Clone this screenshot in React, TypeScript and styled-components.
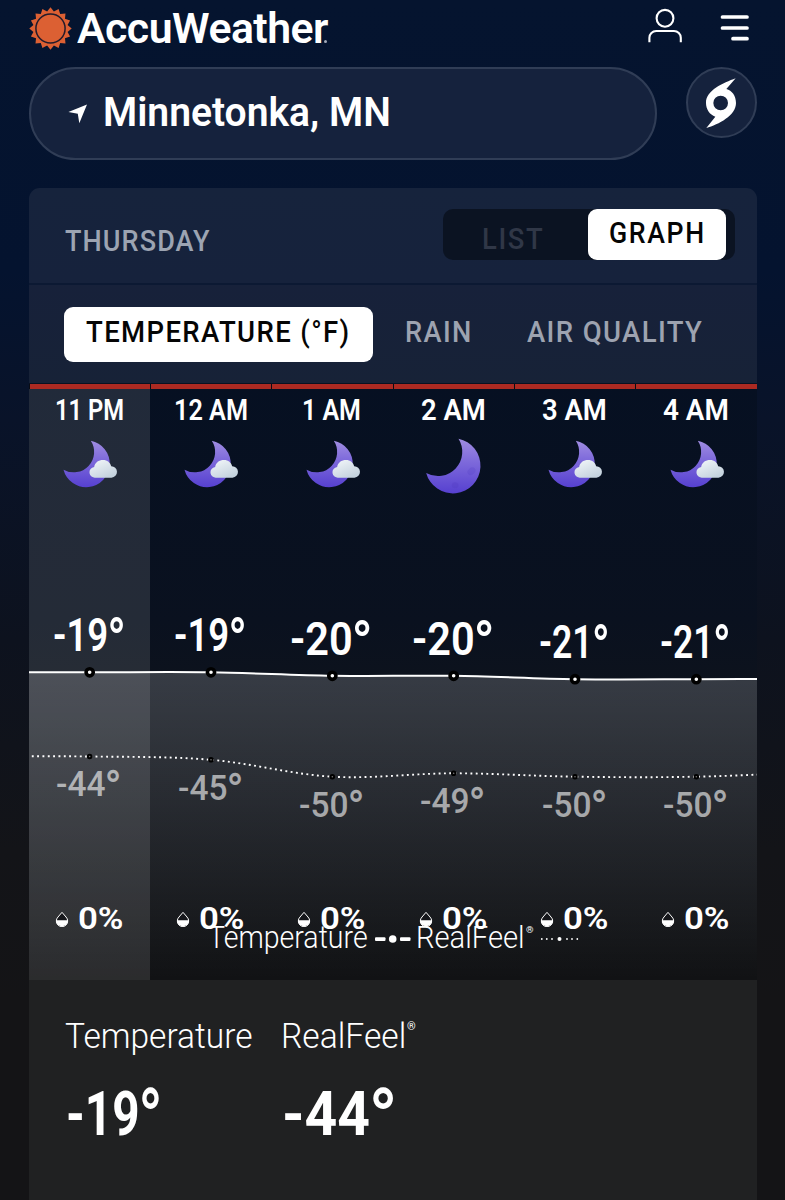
import React, { useLayoutEffect, useRef, useState } from "react";
import styled, { createGlobalStyle } from "styled-components";

const GlobalStyle = createGlobalStyle`
  *, *::before, *::after { box-sizing: border-box; }
  html, body { margin: 0; padding: 0; background: #141416; }
  body { font-family: Roboto, "Liberation Sans", sans-serif; color: #fff; }
`;

/* ---------- text set to a fixed measure ---------- */

const FitBox = styled.span<{ $width: number }>`
  display: inline-block;
  width: ${(p) => p.$width}px;
  white-space: nowrap;
  vertical-align: top;
  text-align: left;
`;

const FitInner = styled.span`
  display: inline-block;
  transform-origin: 0 50%;
`;

function Fit({ width, children }: { width: number; children: React.ReactNode }) {
  const ref = useRef<HTMLSpanElement>(null);
  const [scale, setScale] = useState(1);
  useLayoutEffect(() => {
    if (ref.current) setScale(width / ref.current.offsetWidth);
  }, [width]);
  return (
    <FitBox $width={width}>
      <FitInner ref={ref} style={{ transform: `scaleX(${scale})` }}>
        {children}
      </FitInner>
    </FitBox>
  );
}

/* Degree ring, larger and lighter than the font's own proportion */
const Ring = styled.span`
  font-size: 1.34em;
  font-weight: 500;
  line-height: 0;
  vertical-align: -0.155em;
  margin-left: -0.02em;
`;

const Degrees = ({ value, width }: { value: number; width: number }) => (
  <Fit width={width}>
    {value}
    <Ring>°</Ring>
  </Fit>
);

/* ---------- layout ---------- */

const Page = styled.div`
  width: 785px;
  height: 1200px;
  overflow: hidden;
  padding: 0 28.4px 0 28.6px;
  display: flex;
  flex-direction: column;
  background: linear-gradient(#05142f 0, #04132f 270px, #091329 420px, #0d121e 640px, #131418 850px, #141416 1000px);
`;

const Header = styled.header`
  height: 67.3px;
  flex: none;
  display: flex;
  align-items: flex-start;
`;

const Logo = styled.div`
  display: flex;
  align-items: flex-start;
  gap: 5.4px;
  padding-top: 7px;
  flex: 1;
`;

const Wordmark = styled.div`
  font-size: 42px;
  font-weight: 600;
  line-height: 42px;
  letter-spacing: -0.5px;
  padding-top: 0.8px;
`;

const TradeDot = styled.span`
  width: 3px;
  height: 3px;
  margin: 32.5px 0 0 -8.5px;
  border-radius: 50%;
  background: #a3abba;
`;

const HeaderIcons = styled.div`
  display: flex;
  gap: 38px;
  padding: 7px 7.3px 0 0;
`;

const SearchRow = styled.div`
  display: flex;
  justify-content: space-between;
  align-items: flex-start;
  height: 121.2px;
  flex: none;
`;

const LocationField = styled.div`
  width: 628px;
  height: 92.5px;
  display: flex;
  align-items: center;
  gap: 15px;
  padding-left: 37.5px;
  border-radius: 47px;
  border: 2px solid #303d56;
  background: #15223d;
`;

const LocationName = styled.div`
  font-size: 40px;
  font-weight: 600;
  line-height: 46px;
  padding-bottom: 1px;
`;

const StormButton = styled.button`
  width: 71px;
  height: 71px;
  padding: 0;
  display: flex;
  align-items: center;
  justify-content: center;
  border-radius: 50%;
  border: 2px solid #303d56;
  background: #15223d;
`;

const Card = styled.main`
  width: 728px;
  flex: 1;
  display: flex;
  flex-direction: column;
  overflow: hidden;
  border-radius: 11px 11px 0 0;
`;

const CardHeader = styled.div`
  height: 94.8px;
  flex: none;
  display: flex;
  justify-content: space-between;
  padding: 21px 21.5px 0 36px;
  background: linear-gradient(#16233c, #16223c);
`;

const DayName = styled.div`
  font-size: 30px;
  font-weight: 500;
  line-height: 36px;
  letter-spacing: 1.2px;
  padding-top: 13.8px;
  color: #9ca4b2;
`;

const Toggle = styled.div`
  width: 292px;
  height: 50.5px;
  display: flex;
  border-radius: 10px;
  padding-right: 9px;
  background: #0b1322;
`;

const ToggleOption = styled.button<{ $active?: boolean }>`
  flex: ${(p) => (p.$active ? "0 0 138.5px" : "1")};
  height: 100%;
  margin: 0;
  padding: ${(p) => (p.$active ? "0 0 4px 1px" : "8px 4px 0 0")};
  border: 0;
  border-radius: 9px;
  font: 500 30px/36px Roboto, sans-serif;
  letter-spacing: 1.8px;
  color: ${(p) => (p.$active ? "#050505" : "#303747")};
  background: ${(p) => (p.$active ? "#fff" : "transparent")};
`;

const Tabs = styled.nav`
  height: 100.4px;
  flex: none;
  display: flex;
  align-items: flex-start;
  border-top: 2px solid #0c1933;
  border-bottom: 1.4px solid #091121;
  padding: 21.4px 0 0 35.5px;
  background: linear-gradient(#17213a, #172237);
`;

const Tab = styled.button<{ $active?: boolean; $gap: number }>`
  width: ${(p) => (p.$active ? "309.2px" : "auto")};
  height: 55.4px;
  margin: 0 0 0 ${(p) => p.$gap}px;
  padding: 0 0 4px;
  border: 0;
  border-radius: 9px;
  font: 500 30px/36px Roboto, sans-serif;
  letter-spacing: 1.5px;
  color: ${(p) => (p.$active ? "#050505" : "#9da3b0")};
  background: ${(p) => (p.$active ? "#fff" : "transparent")};
`;

/* ---------- hourly chart ---------- */

const CHART_W = 728;
const CHART_H = 596.2;
const COL = CHART_W / 6;

const Chart = styled.section`
  position: relative;
  height: ${CHART_H}px;
  flex: none;
  background: linear-gradient(#061022 0, #0a111f 40%, #0e131c 55%, #111214 100%);
`;

const Plot = styled.svg`
  position: absolute;
  left: 0;
  top: 0;
  width: 100%;
  height: 100%;
`;

const Hours = styled.div`
  position: relative;
  display: grid;
  grid-template-columns: repeat(6, 1fr);
  height: 100%;
`;

const Hour = styled.div<{ $current?: boolean }>`
  position: relative;
  display: flex;
  flex-direction: column;
  align-items: center;
  background: ${(p) => (p.$current ? "rgba(255,255,255,.108)" : "transparent")};
`;

const AlertBar = styled.div`
  align-self: stretch;
  height: 5px;
  border-left: 1.5px solid #0a0b12;
  background: #ac2a22;
`;

const HourTime = styled.div`
  margin-top: 3px;
  font-size: 30px;
  font-weight: 600;
  line-height: 36px;
`;

const HourIcon = styled.svg`
  width: 58.3px;
  height: 58.3px;
  margin-top: 10.3px;
`;

const Reading = styled.div<{ $feel?: boolean }>`
  position: absolute;
  left: 0;
  right: 0;
  text-align: center;
  line-height: 50px;
  font-size: ${(p) => (p.$feel ? 35.5 : 46)}px;
  font-weight: ${(p) => (p.$feel ? 500 : 600)};
  color: ${(p) => (p.$feel ? "rgba(255,255,255,.6)" : "#fff")};
`;

const Chance = styled.div`
  margin: auto 0 43.2px;
  display: flex;
  align-items: center;
  gap: 9px;
  font-size: 31px;
  font-weight: 600;
  line-height: 36px;
`;

const Legend = styled.div`
  position: absolute;
  left: 179.4px;
  top: 536.4px;
  display: flex;
  align-items: center;
  font-size: 30.5px;
  font-weight: 300;
  line-height: 36px;
`;

const LegendKey = styled.svg<{ $before: number; $after: number }>`
  margin: 1px ${(p) => p.$after}px 0 ${(p) => p.$before}px;
  display: block;
`;

const Mark = styled.span<{ $size: number; $lift: number }>`
  display: inline-block;
  vertical-align: top;
  font-size: ${(p) => p.$size}px;
  line-height: 12px;
  font-weight: 400;
  margin: ${(p) => p.$lift}px 0 0 1px;
`;

/* ---------- summary ---------- */

const Summary = styled.section`
  flex: 1;
  display: flex;
  gap: 29px;
  padding: 34.4px 0 0 36px;
  background: #202122;
`;

const Stat = styled.div`
  width: 187.5px;
`;

const StatLabel = styled.div`
  font-size: 35.5px;
  font-weight: 300;
  line-height: 44px;
  white-space: nowrap;
`;

const StatValue = styled.div`
  margin-top: 18.6px;
  padding-left: 1px;
  font-size: 62px;
  font-weight: 700;
  line-height: 74px;
`;

/* ---------- drawings ---------- */

const sunRays = Array.from({ length: 32 }, (_, i) => {
  const r = i % 2 ? 17.4 : 21.2;
  const a = (i * Math.PI) / 16 - Math.PI / 2;
  return `${(21.5 + r * Math.cos(a)).toFixed(2)},${(21.5 + r * Math.sin(a)).toFixed(2)}`;
}).join(" ");

const SunLogo = () => (
  <svg width="43" height="43" viewBox="0 0 43 43">
    <polygon points={sunRays} fill="#dc6033" />
    <circle cx="21.5" cy="21.5" r="14.6" fill="#dc6033" stroke="#241b2b" strokeWidth="1.5" />
  </svg>
);

const UserIcon = () => (
  <svg width="34" height="37" viewBox="0 0 34 37" fill="none" stroke="#fff" strokeWidth="2.1">
    <circle cx="17" cy="11.3" r="8.4" />
    <path d="M1.4 35.2v-4.4a6.8 6.8 0 0 1 6.8-6.8h17.8a6.8 6.8 0 0 1 6.8 6.8v4.4" />
  </svg>
);

const MenuIcon = () => (
  <svg width="29" height="37" viewBox="0 0 29 37" stroke="#fff" strokeWidth="3.7" strokeLinecap="round">
    <path d="M2.5 10H27M2.5 21H27M13 31.7H27" />
  </svg>
);

const ArrowIcon = () => (
  <svg width="20" height="20" viewBox="0 0 20 20">
    <path d="M19 .6 11.3 19.3 9.8 9.8.4 8Z" fill="#fff" />
  </svg>
);

const StormIcon = () => (
  <svg width="32" height="51" viewBox="360 233 96 153">
    <path
      fill="#fff"
      fillRule="evenodd"
      d="M452 237C415 251 363 272 363 311C363 330 374 346 391 352L364 386C401 375 453 349 453 311C453 290 441 273 424 269ZM407 289A22 22 0 1 1 407 333A22 22 0 1 1 407 289Z"
    />
  </svg>
);

const MoonShade = ({ id, y1, y2 }: { id: string; y1: number; y2: number }) => (
  <linearGradient id={id} gradientUnits="userSpaceOnUse" x1="0" x2="0" y1={y1} y2={y2}>
    <stop offset="0" stopColor="#a08de2" />
    <stop offset=".4" stopColor="#7f6bdb" />
    <stop offset="1" stopColor="#5640d0" />
  </linearGradient>
);

const ClearNight = () => (
  <HourIcon viewBox="71.5 175 175 175">
    <defs>
      <MoonShade id="moonFull" y1={177} y2={342} />
    </defs>
    <path d="M175 177A83 83 0 1 1 78 280A73 73 0 0 0 175 177Z" fill="url(#moonFull)" />
    <ellipse cx="165" cy="317" rx="10" ry="9" fill="#4e38bd" opacity=".28" />
    <ellipse cx="214" cy="275" rx="13" ry="10" fill="#5540c4" opacity=".25" transform="rotate(-40 214 275)" />
  </HourIcon>
);

const CloudyNight = ({ id }: { id: string }) => (
  <HourIcon viewBox="119.5 175 175 175">
    <defs>
      <MoonShade id={`moon${id}`} y1={183} y2={323} />
      <linearGradient id={`cloud${id}`} gradientUnits="userSpaceOnUse" x1="240" x2="262" y1="240" y2="294">
        <stop offset="0" stopColor="#edf2f6" />
        <stop offset="1" stopColor="#c4d2de" />
      </linearGradient>
    </defs>
    <path d="M212 183A70.5 70.5 0 1 1 130 270A61.5 61.5 0 0 0 212 183Z" fill={`url(#moon${id})`} />
    <path
      d="M226 294A16 16 0 0 1 222 262C224 249 235 241 249 241C261 241 271 249 273 260A17 17 0 0 1 274 294Z"
      fill={`url(#cloud${id})`}
    />
  </HourIcon>
);

const DropIcon = () => (
  <svg width="14" height="16" viewBox="0 0 42 48">
    <path d="M21 4 9 18A17 17 0 1 0 33 18Z" fill="#16171b" stroke="#fff" strokeWidth="3" strokeLinejoin="round" />
    <path d="M3 28H39A18 18 0 0 1 3 28Z" fill="#fff" />
  </svg>
);

/* ---------- data ---------- */

type Entry = {
  time: string;
  timeW: number;
  clear?: boolean;
  temp: number;
  tempW: number;
  tempY: number;
  feel: number;
  feelY: number;
};

const hours: Entry[] = [
  { time: "11 PM", timeW: 69, temp: -19, tempW: 73, tempY: 288.3, feel: -44, feelY: 372.5 },
  { time: "12 AM", timeW: 74, temp: -19, tempW: 73, tempY: 288.3, feel: -45, feelY: 375.8 },
  { time: "1 AM", timeW: 59, temp: -20, tempW: 83, tempY: 291.8, feel: -50, feelY: 392.7 },
  { time: "2 AM", timeW: 65, clear: true, temp: -20, tempW: 83, tempY: 291.8, feel: -49, feelY: 389.3 },
  { time: "3 AM", timeW: 65, temp: -21, tempW: 71, tempY: 295.2, feel: -50, feelY: 392.7 },
  { time: "4 AM", timeW: 66, temp: -21, tempW: 71, tempY: 295.2, feel: -50, feelY: 392.7 },
];

const centre = (i: number) => COL * (i + 0.5);

function smooth(ys: number[]) {
  const pts = ys.map((y, i) => [centre(i - 1), y]);
  const at = (i: number) => pts[Math.max(0, Math.min(pts.length - 1, i))];
  let d = `M${pts[0][0]} ${pts[0][1]}`;
  for (let i = 0; i < pts.length - 1; i++) {
    const [a, b, c, e] = [at(i - 1), at(i), at(i + 1), at(i + 2)];
    d += `C${b[0] + (c[0] - a[0]) / 6} ${b[1] + (c[1] - a[1]) / 6} ${c[0] - (e[0] - b[0]) / 6} ${c[1] - (e[1] - b[1]) / 6} ${c[0]} ${c[1]}`;
  }
  return d;
}

const tempPath = smooth([288.3, ...hours.map((h) => h.tempY), 294.6]);
const feelPath = smooth([372.5, ...hours.map((h) => h.feelY), 388]);

export default function App() {
  return (
    <>
      <GlobalStyle />
      <Page>
        <Header>
          <Logo>
            <SunLogo />
            <Wordmark>
              <Fit width={250.5}>AccuWeather</Fit>
            </Wordmark>
            <TradeDot />
          </Logo>
          <HeaderIcons>
            <UserIcon />
            <MenuIcon />
          </HeaderIcons>
        </Header>

        <SearchRow>
          <LocationField>
            <ArrowIcon />
            <LocationName>
              <Fit width={288}>Minnetonka, MN</Fit>
            </LocationName>
          </LocationField>
          <StormButton aria-label="Storms">
            <StormIcon />
          </StormButton>
        </SearchRow>

        <Card>
          <CardHeader>
            <DayName>
              <Fit width={146}>THURSDAY</Fit>
            </DayName>
            <Toggle>
              <ToggleOption>
                <Fit width={62}>LIST</Fit>
              </ToggleOption>
              <ToggleOption $active>
                <Fit width={97}>GRAPH</Fit>
              </ToggleOption>
            </Toggle>
          </CardHeader>

          <Tabs>
            <Tab $active $gap={0}>
              <Fit width={265}>TEMPERATURE (°F)</Fit>
            </Tab>
            <Tab $gap={32}>
              <Fit width={68}>RAIN</Fit>
            </Tab>
            <Tab $gap={53.5}>
              <Fit width={176}>AIR QUALITY</Fit>
            </Tab>
          </Tabs>

          <Chart>
            <Plot viewBox={`0 0 ${CHART_W} ${CHART_H}`} preserveAspectRatio="none">
              <defs>
                <linearGradient id="area" gradientUnits="userSpaceOnUse" x1="0" x2="0" y1="288" y2={CHART_H}>
                  <stop offset="0" stopColor="#fff" stopOpacity=".175" />
                  <stop offset="1" stopColor="#fff" stopOpacity="0" />
                </linearGradient>
              </defs>
              <path d={`${tempPath}V${CHART_H}H-61Z`} fill="url(#area)" />
            </Plot>
            <Hours>
              {hours.map((h, i) => (
                <Hour key={h.time} $current={i === 0}>
                  <AlertBar />
                  <HourTime>
                    <Fit width={h.timeW}>{h.time}</Fit>
                  </HourTime>
                  {h.clear ? <ClearNight /> : <CloudyNight id={String(i)} />}
                  <Reading style={{ top: h.tempY - 61.6 }}>
                    <Degrees value={h.temp} width={h.tempW} />
                  </Reading>
                  <Reading $feel style={{ top: h.feelY + 3.3 }}>
                    <Degrees value={h.feel} width={66} />
                  </Reading>
                  <Chance>
                    <DropIcon />
                    <Fit width={46}>0%</Fit>
                  </Chance>
                </Hour>
              ))}
            </Hours>
            <Plot viewBox={`0 0 ${CHART_W} ${CHART_H}`} preserveAspectRatio="none">
              <path d={tempPath} fill="none" stroke="#fff" strokeWidth="2" />
              <path d={feelPath} fill="none" stroke="#fff" strokeWidth="1.9" strokeDasharray="1.9 3.4" />
              {hours.map((h, i) => (
                <g key={h.time}>
                  <circle cx={centre(i)} cy={h.tempY} r="3.6" fill="#fff" stroke="#000" strokeWidth="3.6" />
                  <circle cx={centre(i)} cy={h.feelY} r="1.8" fill="#777" stroke="#000" strokeWidth="2" />
                </g>
              ))}
            </Plot>
            <Legend>
              <Fit width={160}>Temperature</Fit>
              <LegendKey $before={6} $after={4} width="38" height="8" viewBox="0 0 38 8" fill="#fff">
                <rect x="1" y="2.2" width="10.5" height="3.8" rx="1" />
                <circle cx="18.7" cy="4" r="3.8" />
                <rect x="26" y="2.2" width="10.5" height="3.8" rx="1" />
              </LegendKey>
              <Fit width={109}>RealFeel</Fit>
              <Mark $size={9.5} $lift={-17}>®</Mark>
              <LegendKey $before={6.5} $after={0} width="40" height="8" viewBox="0 0 40 8" fill="#fff">
                {[1.8, 6.8, 12, 27, 32, 37.3].map((x) => (
                  <circle key={x} cx={x} cy="4" r="0.9" />
                ))}
                <circle cx="19.5" cy="4" r="2" />
              </LegendKey>
            </Legend>
          </Chart>

          <Summary>
            <Stat>
              <StatLabel>
                <Fit width={188}>Temperature</Fit>
              </StatLabel>
              <StatValue>
                <Degrees value={-19} width={97} />
              </StatValue>
            </Stat>
            <Stat>
              <StatLabel>
                <Fit width={125}>RealFeel</Fit>
                <Mark $size={11} $lift={7}>®</Mark>
              </StatLabel>
              <StatValue>
                <Degrees value={-44} width={116} />
              </StatValue>
            </Stat>
          </Summary>
        </Card>
      </Page>
    </>
  );
}
